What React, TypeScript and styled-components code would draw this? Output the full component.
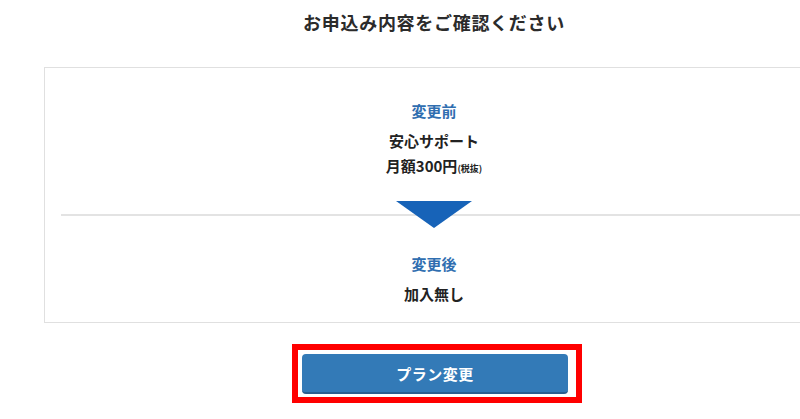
import * as React from 'react';
import styled, { createGlobalStyle } from 'styled-components';

const GlobalStyle = createGlobalStyle`
    html, body {
        margin: 0;
        padding: 0;
        background: #fff;
        overflow: hidden;
    }
    body {
        font-family: 'Noto Sans CJK JP', 'Noto Sans', sans-serif;
        color: #222;
    }
`;

const Page = styled.div`
    width: 780px;
    padding-left: 44px;
`;

const Title = styled.h2`
    margin: 0 0 32px;
    padding-top: 9px;
    font-size: 18px;
    line-height: 26px;
    font-weight: 700;
    letter-spacing: 0.7px;
    text-align: center;
    color: #2b2b2b;
`;

const Card = styled.div`
    border: 1px solid #e0e0e0;
    padding: 0 16px;
`;

const Block = styled.div<{ $top: number; $bottom: number }>`
    display: flex;
    flex-direction: column;
    align-items: center;
    padding-top: ${(p) => p.$top}px;
    padding-bottom: ${(p) => p.$bottom}px;
`;

const Label = styled.div`
    font-size: 15px;
    line-height: 22px;
    font-weight: 700;
    color: #2f6eb0;
    margin-bottom: 6px;
`;

const Value = styled.div`
    font-size: 15px;
    line-height: 25px;
    font-weight: 700;
    color: #222;
`;

const Tax = styled.span`
    font-size: 9px;
    font-weight: 700;
`;

const Divider = styled.div`
    height: 27px;
    display: flex;
    justify-content: center;
    background: linear-gradient(#e3e3e3, #e3e3e3) center / 100% 2px no-repeat;
`;

const Frame = styled.div`
    width: fit-content;
    margin: 21px 0 0 248px;
    border: 6px solid #ff0000;
    padding: 4px 8px 3px 4px;
`;

const Button = styled.button`
    width: 266px;
    height: 40px;
    border: none;
    border-bottom: 2px solid #2a5f90;
    border-radius: 4px;
    background: #337ab7;
    color: #fff;
    font-family: inherit;
    font-size: 15px;
    font-weight: 700;
    letter-spacing: 0.5px;
    cursor: pointer;
`;

const App: React.FC = () => {
    return (
        <>
            <GlobalStyle />
            <Page>
                <Title>お申込み内容をご確認ください</Title>
                <Card>
                    <Block $top={32} $bottom={20}>
                        <Label>変更前</Label>
                        <Value>安心サポート</Value>
                        <Value>
                            月額300円<Tax>(税抜)</Tax>
                        </Value>
                    </Block>
                    <Divider>
                        <svg width="76" height="27" viewBox="0 0 76 27">
                            <polygon points="0,0 76,0 38,27" fill="#1763b8" />
                        </svg>
                    </Divider>
                    <Block $top={25} $bottom={16}>
                        <Label>変更後</Label>
                        <Value>加入無し</Value>
                    </Block>
                </Card>
                <Frame>
                    <Button>プラン変更</Button>
                </Frame>
            </Page>
        </>
    );
};

export default App;
